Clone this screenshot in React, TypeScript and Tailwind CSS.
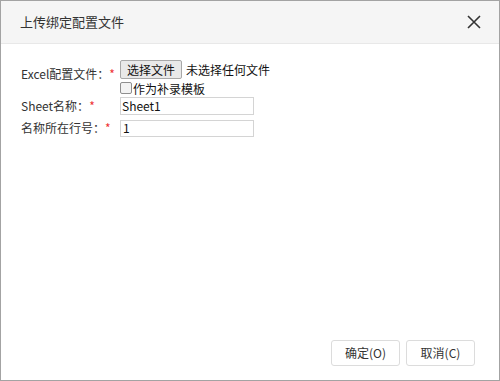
export default function App() {
  return (
    <div
      className="w-[500px] h-[381px] bg-white border border-[#a3a3a3] flex flex-col text-[12px] text-[#333]"
      style={{ fontFamily: '"Microsoft YaHei", "Noto Sans CJK SC", sans-serif' }}
    >
      {/* Header */}
      <div className="h-[43px] shrink-0 bg-[#f5f5f5] border-b border-[#e8e8e8] flex items-center pl-[19px] pr-[17px]">
        <span className="text-[13px] text-[#333]">上传绑定配置文件</span>
        <button className="ml-auto w-[16px] h-[16px] flex items-center justify-center">
          <svg width="14" height="14" viewBox="0 0 14 14">
            <path d="M1 1L13 13M13 1L1 13" stroke="#333" strokeWidth="1.6" />
          </svg>
        </button>
      </div>

      {/* Body */}
      <div className="flex-1 pt-[16px] pl-[20px]">
        <div className="flex">
          <div className="w-[99px] pt-[7px] leading-[14px]">
            Excel配置文件：<span className="text-[#e33]">*</span>
          </div>
          <div className="flex flex-col">
            <div className="flex items-center">
              <span className="h-[19px] px-[6px] border border-[#a8a8a8] rounded-[2px] bg-[#e9e9e9] text-[#111] flex items-center leading-none">
                选择文件
              </span>
              <span className="ml-[4px] text-[#111]">未选择任何文件</span>
            </div>
            <label className="flex items-center h-[15px] mt-[1px] text-[#111]">
              <span className="w-[12px] h-[12px] border border-[#8f8f8f] rounded-[2px] bg-[#f3f3f3]" />
              <span className="ml-[1px] mt-[3px]">作为补录模板</span>
            </label>
          </div>
        </div>
        <div className="flex items-center mt-[2px]">
          <div className="w-[99px]">
            Sheet名称：<span className="text-[#e33]">*</span>
          </div>
          <div className="w-[134px] h-[18px] border border-[#d4d4d4] flex items-center pl-[1px] text-[#111]">Sheet1</div>
        </div>
        <div className="flex items-center mt-[4px]">
          <div className="w-[99px]">
            名称所在行号：<span className="text-[#e33]">*</span>
          </div>
          <div className="w-[134px] h-[17px] border border-[#d4d4d4] flex items-center pl-[2px] text-[#111]">1</div>
        </div>
      </div>

      {/* Footer */}
      <div className="h-[40px] shrink-0 flex justify-end gap-[6px] pr-[24px] pb-[14px] items-start">
        <button className="w-[69px] h-[26px] border border-[#dcdcdc] rounded-[3px] bg-white text-[12px] text-[#333]">
          确定(O)
        </button>
        <button className="w-[69px] h-[26px] border border-[#dcdcdc] rounded-[3px] bg-white text-[12px] text-[#333]">
          取消(C)
        </button>
      </div>
    </div>
  )
}
